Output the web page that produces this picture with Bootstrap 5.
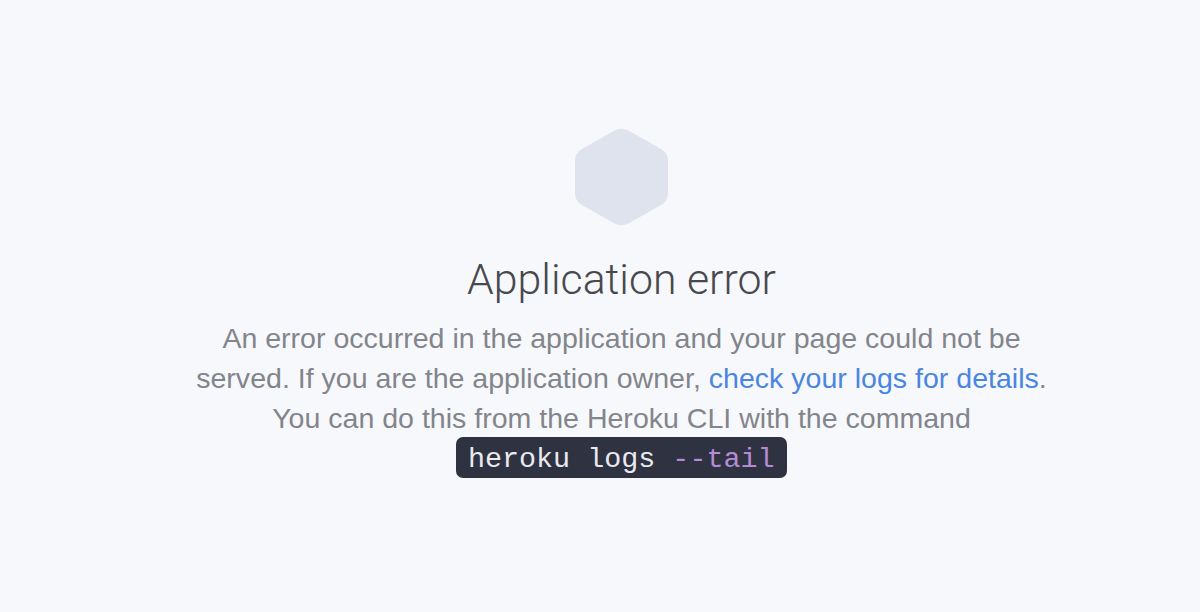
<!DOCTYPE html>
<html lang="en">
<head>
<meta charset="utf-8">
<title>Application error</title>
<link href="https://cdn.jsdelivr.net/npm/bootstrap@5.3.0/dist/css/bootstrap.min.css" rel="stylesheet">
<style>
html, body { height: 612px; }
body { background: #f7f8fc; overflow: hidden; font-family: "Liberation Sans", Arial, sans-serif; }
.err-shell { height: 612px; padding: 128px 0 0 43px; }
.err-mark { display: block; width: 93px; height: 98px; }
.err-title { font-family: Roboto, "Liberation Sans", sans-serif; font-weight: 300; font-size: 42.8px; line-height: 50px; color: #47494e; margin: 28px 0 0; }
.err-text { width: 860px; font-size: 28.55px; line-height: 40px; color: #82858b; margin: 14px 0 0; }
.err-text a { color: #4a86e0; text-decoration: none; }
.err-cmd { display: inline-block; background: #2f3240; color: #e9e9f0; font-family: "Liberation Mono", monospace; font-size: 28.4px; line-height: 37px; padding: 4px 12px 0 11.5px; border-radius: 7px; vertical-align: top; margin-top: -1px; }
.err-flag { color: #b58bd6; }
</style>
</head>
<body>
<main class="err-shell d-flex flex-column align-items-center text-center">
  <svg class="err-mark" viewBox="0 0 94 98" preserveAspectRatio="none" aria-hidden="true">
    <path d="M40 2.6 Q47 -1 54 2.6 L87 21 Q94 25 94 33 L94 65 Q94 73 87 77 L54 95.4 Q47 99 40 95.4 L7 77 Q0 73 0 65 L0 33 Q0 25 7 21 Z" fill="#dfe3ed"/>
  </svg>
  <h1 class="err-title">Application error</h1>
  <p class="err-text">An error occurred in the application and your page could not be served. If you are the application owner, <a href="#">check your logs for details</a>. You can do this from the Heroku CLI with the command <code class="err-cmd">heroku logs <span class="err-flag">--tail</span></code></p>
</main>
<script src="https://cdn.jsdelivr.net/npm/bootstrap@5.3.0/dist/js/bootstrap.bundle.min.js"></script>
</body>
</html>
